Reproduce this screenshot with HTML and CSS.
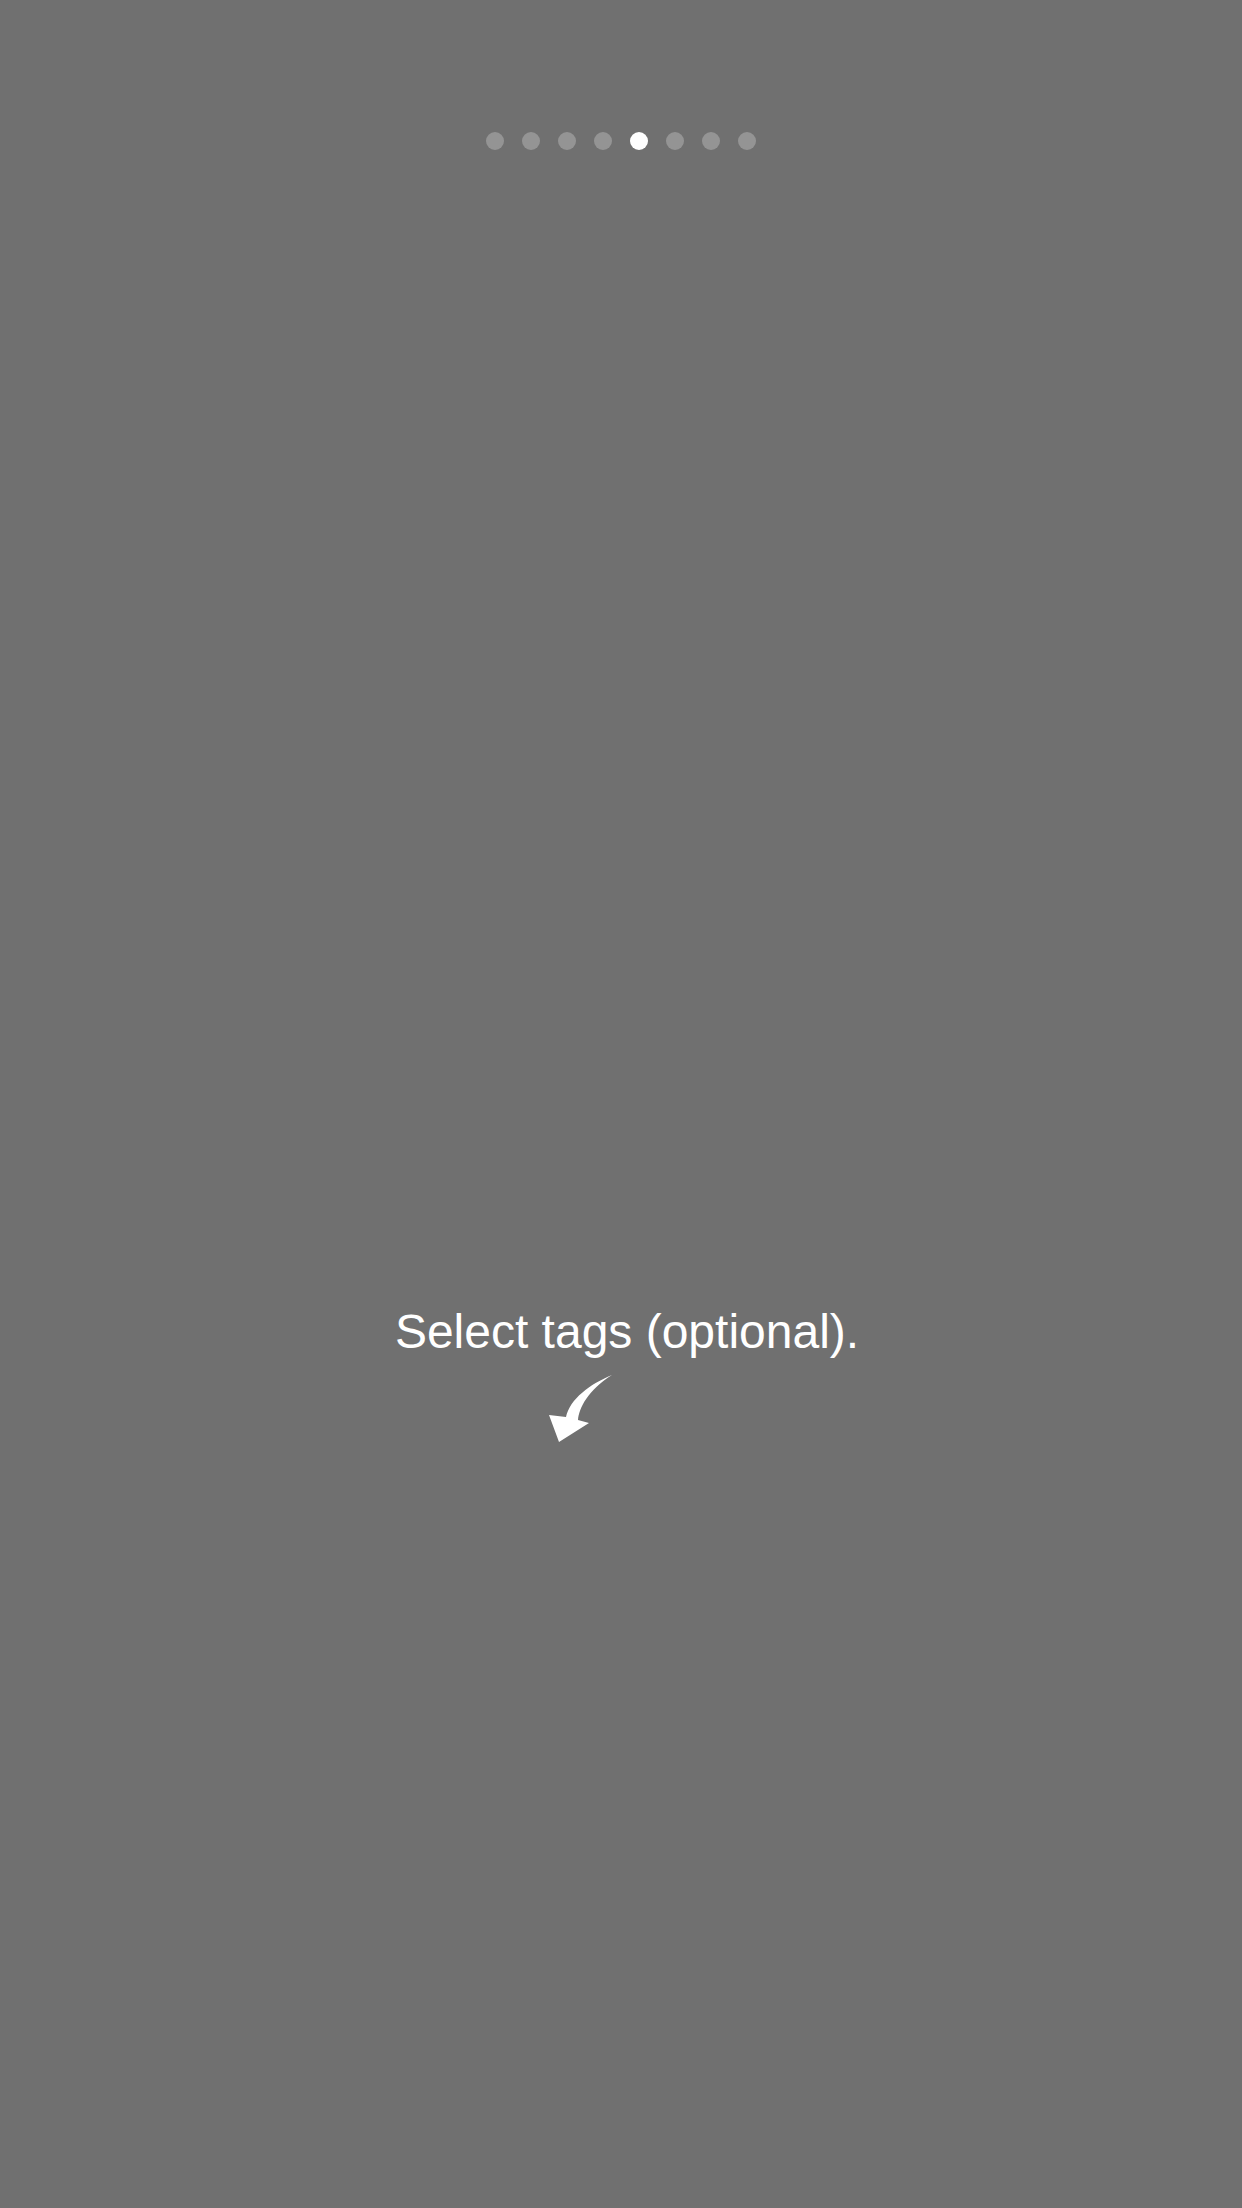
FILE: index.html
```html
<!DOCTYPE html>
<html lang="en">
<head>
<meta charset="utf-8">
<title>Select tags</title>
<link rel="stylesheet" href="styles.css">
</head>
<body>
<main class="screen">
  <div class="pager">
    <span class="dot"></span>
    <span class="dot"></span>
    <span class="dot"></span>
    <span class="dot"></span>
    <span class="dot active"></span>
    <span class="dot"></span>
    <span class="dot"></span>
    <span class="dot"></span>
  </div>
  <p class="hint">Select tags (optional).</p>
  <svg class="arrow" width="100" height="100" viewBox="0 0 100 100" aria-hidden="true">
    <path d="M82,15 C60,24 40,39 36,57 L19,55 L29,82 L59,63 L48,60 C49,48 58,30 82,15 Z" fill="#ffffff"/>
  </svg>
</main>
</body>
</html>
```

FILE: styles.css
```css
html, body {
  margin: 0;
  padding: 0;
  background: #707070;
}

.screen {
  width: 1242px;
  height: 2208px;
  display: flex;
  flex-direction: column;
  font-family: "Liberation Sans", Arial, sans-serif;
  color: #ffffff;
}

.pager {
  display: flex;
  justify-content: center;
  gap: 18px;
  padding-top: 132px;
}

.dot {
  width: 18px;
  height: 18px;
  border-radius: 50%;
  background: #949494;
}

.dot.active {
  background: #ffffff;
}

.hint {
  margin: 1154px 0 0 0;
  padding-left: 12px;
  font-size: 48px;
  line-height: 56px;
  text-align: center;
  font-weight: 400;
}

.arrow {
  display: block;
  margin: 0 0 0 530px;
}
```
